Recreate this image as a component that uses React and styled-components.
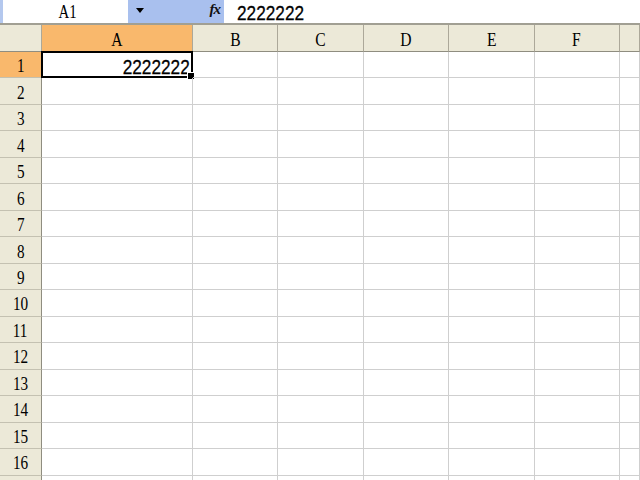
import React from "react";
import styled, { createGlobalStyle } from "styled-components";

const Global = createGlobalStyle`
  html, body { margin: 0; padding: 0; background: #fff; overflow: hidden; }
  body { width: 640px; height: 480px; }
  * { box-sizing: border-box; }
`;

const Page = styled.div`
  width: 640px;
  height: 480px;
  overflow: hidden;
  background: #fff;
  display: flex;
  flex-direction: column;
`;

const FormulaBar = styled.div`
  display: flex;
  height: 23px;
  flex: none;
  background: #fff;
`;

const Edge = styled.div`
  width: 3px;
  background: #b4c8ee;
`;

const NameBox = styled.div`
  width: 125px;
  display: flex;
  align-items: center;
  padding-left: 53px;
  background: #fff;
`;

const FuncArea = styled.div`
  width: 96px;
  background: #a9c0ee;
  display: flex;
  align-items: center;
  justify-content: space-between;
  padding: 0 4px 0 8px;
`;

const Arrow = styled.span`
  width: 0;
  height: 0;
  border-left: 4px solid transparent;
  border-right: 4px solid transparent;
  border-top: 5px solid #000;
  margin-top: -2px;
`;

const Fx = styled.span`
  font-family: "Liberation Serif", serif;
  font-style: italic;
  font-weight: bold;
  font-size: 15px;
  letter-spacing: -1px;
  color: #111;
  margin-top: -4px;
`;

const FormulaInput = styled.div`
  flex: 1;
  display: flex;
  align-items: center;
  padding: 1px 0 0 13px;
`;

const Narrow = styled.span`
  display: inline-block;
  font-family: ${(p) => (p.$serif ? '"Liberation Serif", serif' : '"Liberation Sans", sans-serif')};
  font-size: ${(p) => p.$size || 19}px;
  line-height: 1;
  color: #000;
  transform: scaleX(${(p) => p.$sx || 0.8});
  transform-origin: ${(p) => p.$origin || "center"};
  white-space: nowrap;
  -webkit-text-stroke: ${(p) => (p.$heavy ? "0.3px #000" : "0")};
`;

const Grid = styled.div`
  display: grid;
  grid-template-columns: 42px 151px repeat(5, 85.4px) 1fr;
  grid-template-rows: 27px;
  grid-auto-rows: 26.47px;
  border-top: 2px solid #a19f93;
`;

const HeaderCell = styled.div`
  background: ${(p) => (p.$active ? "#f9b86c" : "#ece9d8")};
  border-right: 1px solid #aca899;
  border-bottom: 1px solid #8f8d80;
  display: flex;
  align-items: center;
  justify-content: center;
  padding-top: 3px;
  overflow: hidden;
`;

const RowHead = styled.div`
  background: ${(p) => (p.$active ? "#f9b86c" : "#ece9d8")};
  border-right: 1px solid #8f8d80;
  border-bottom: 1px solid #c4c1b1;
  display: flex;
  align-items: center;
  justify-content: center;
  padding-top: 2px;
  overflow: hidden;
`;

const Cell = styled.div`
  position: relative;
  border-right: 1px solid #cfcfcf;
  border-bottom: 1px solid #cfcfcf;
  display: flex;
  align-items: center;
  justify-content: flex-end;
  padding: 3px 1px 0 0;
  ${(p) =>
    p.$selected &&
    `
    border: 2px solid #000;
    margin: -1px 0 0 -1px;
    &::after {
      content: "";
      position: absolute;
      right: -4px;
      bottom: -4px;
      width: 6px;
      height: 6px;
      background: #000;
      border: 1px solid #fff;
    }
  `}
`;

const cols = ["A", "B", "C", "D", "E", "F", ""];
const rows = Array.from({ length: 17 }, (_, i) => i + 1);

export default function App() {
  return (
    <Page>
      <Global />
      <FormulaBar>
        <Edge />
        <NameBox>
          <Narrow $serif $size={19} $sx={0.78}>A1</Narrow>
        </NameBox>
        <FuncArea>
          <Arrow />
          <Fx>fx</Fx>
        </FuncArea>
        <FormulaInput>
          <Narrow $size={21} $sx={0.82} $origin="left" $heavy>2222222</Narrow>
        </FormulaInput>
      </FormulaBar>
      <Grid>
        <HeaderCell />
        {cols.map((c, i) => (
          <HeaderCell key={"h" + i} $active={c === "A"}>
            <Narrow $serif $size={19} $sx={0.82}>{c}</Narrow>
          </HeaderCell>
        ))}
        {rows.map((r) => (
          <React.Fragment key={r}>
            <RowHead $active={r === 1}>
              {r < 17 ? <Narrow $serif $size={19} $sx={0.8}>{r}</Narrow> : null}
            </RowHead>
            {cols.map((c, i) => (
              <Cell key={r + "-" + i} $selected={r === 1 && c === "A"}>
                {r === 1 && c === "A" ? (
                  <Narrow $size={21} $sx={0.82} $origin="right" $heavy>2222222</Narrow>
                ) : null}
              </Cell>
            ))}
          </React.Fragment>
        ))}
      </Grid>
    </Page>
  );
}
